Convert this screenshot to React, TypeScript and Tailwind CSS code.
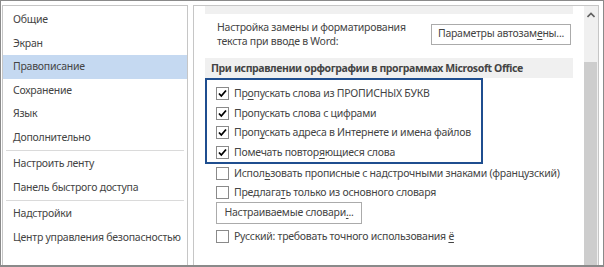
import React from 'react'

const font = { fontFamily: '"Noto Sans", "Open Sans", sans-serif' }

type NavItem = { label: string; selected?: boolean } | 'sep'

const nav: NavItem[] = [
  { label: 'Общие' },
  { label: 'Экран' },
  { label: 'Правописание', selected: true },
  { label: 'Сохранение' },
  { label: 'Язык' },
  { label: 'Дополнительно' },
  'sep',
  { label: 'Настроить ленту' },
  { label: 'Панель быстрого доступа' },
  'sep',
  { label: 'Надстройки' },
  { label: 'Центр управления безопасностью' },
]

function Checkbox({ checked }: { checked?: boolean }) {
  return (
    <span className="w-[13px] h-[13px] shrink-0 border border-[#8a8a8a] bg-white flex items-center justify-center">
      {checked && (
        <svg width="11" height="11" viewBox="0 0 11 11">
          <path d="M2 5.5 L4.3 8 L9 2.5" fill="none" stroke="#000" strokeWidth="1.8" />
        </svg>
      )}
    </span>
  )
}

function Option({
  checked,
  children,
  className = 'h-[19.5px]',
}: {
  checked?: boolean
  children: React.ReactNode
  className?: string
}) {
  return (
    <div className={`flex items-center gap-[5px] ${className}`}>
      <Checkbox checked={checked} />
      <span className="whitespace-nowrap pt-[1px]">{children}</span>
    </div>
  )
}

const U = ({ children }: { children: React.ReactNode }) => (
  <u className="underline-offset-2">{children}</u>
)

export default function App() {
  return (
    <div
      style={font}
      className="w-[604px] h-[267px] bg-white border border-b-2 border-[#8a8a8a] flex pt-[4px] pl-[1px] pr-[4px] text-[10.5px] tracking-[-0.25px] text-[#444] overflow-hidden"
    >
      {/* Sidebar */}
      <div className="w-[186px] h-full border-l border-t border-r border-[#c6c6c6] pt-[2px] shrink-0">
        {nav.map((item, i) =>
          item === 'sep' ? (
            <div key={i} className="h-px bg-[#dadada] mx-[3px] my-[1px]" />
          ) : (
            <div
              key={i}
              className={`h-[23.5px] flex items-center pl-[10px] pt-[1px] whitespace-nowrap ${
                item.selected ? 'bg-[#c5d9f1]' : ''
              }`}
            >
              {item.label}
            </div>
          )
        )}
      </div>

      {/* Main panel */}
      <div className="ml-[5px] flex-1 h-full border-l border-t border-r border-[#c6c6c6] flex">
        <div className="flex-1 pl-[11px] pr-[11px]">
          <div className="h-[8px] bg-[#f0f0f0]" />

          <div className="h-[40px] flex items-center justify-between mb-[4px]">
            <div className="pl-[12px] leading-[14px]">
              Настройка замены и форматирования
              <br />
              текста при вводе в Word:
            </div>
            <button className="w-[140px] h-[21px] mr-[2px] border border-[#ababab] bg-white text-[#444] whitespace-nowrap">
              Параметры автозам<U>е</U>ны...
            </button>
          </div>

          <div className="h-[20px] bg-[#f0f0f0] flex items-center pl-[6px] pt-[1px] font-bold tracking-[-0.4px] whitespace-nowrap">
            При исправлении орфографии в программах Microsoft Office
          </div>

          <div className="w-[278px] border-2 border-[#1f4e8f] pt-[4px] pl-[9px]">
            <Option checked>
              Пр<U>о</U>пускать слова из ПРОПИСНЫХ БУКВ
            </Option>
            <Option checked>Пропускать слова с цифрами</Option>
            <Option checked>
              Проп<U>у</U>скать адреса в Интернете и имена файлов
            </Option>
            <Option checked>
              Помечать повтор<U>я</U>ющиеся слова
            </Option>
          </div>

          <div className="pl-[11px]">
            <Option className="h-[18px]">
              Испол<U>ь</U>зовать прописные с надстрочными знаками (французский)
            </Option>
            <Option className="h-[20px]">
              Предлага<U>т</U>ь только из основного словаря
            </Option>
            <div className="h-[24px]">
              <button className="w-[146px] h-[22px] border border-[#ababab] bg-white text-[#444] whitespace-nowrap">
                Настраиваемые словари<U>.</U>..
              </button>
            </div>
            <Option className="h-[20px]">
              Русский: требовать точного использования <U>ё</U>
            </Option>
          </div>
        </div>

        {/* Scrollbar */}
        <div className="w-[14px] h-full bg-[#f0f0f0] flex flex-col">
          <div className="h-[18px] flex items-center justify-center">
            <svg width="8" height="6" viewBox="0 0 8 6">
              <path d="M0.5 5 L4 1.5 L7.5 5" fill="none" stroke="#606060" strokeWidth="1.6" />
            </svg>
          </div>
          <div className="h-[38px]" />
          <div className="flex-1 bg-[#cdcdcd] mr-[1px]" />
        </div>
      </div>
    </div>
  )
}
